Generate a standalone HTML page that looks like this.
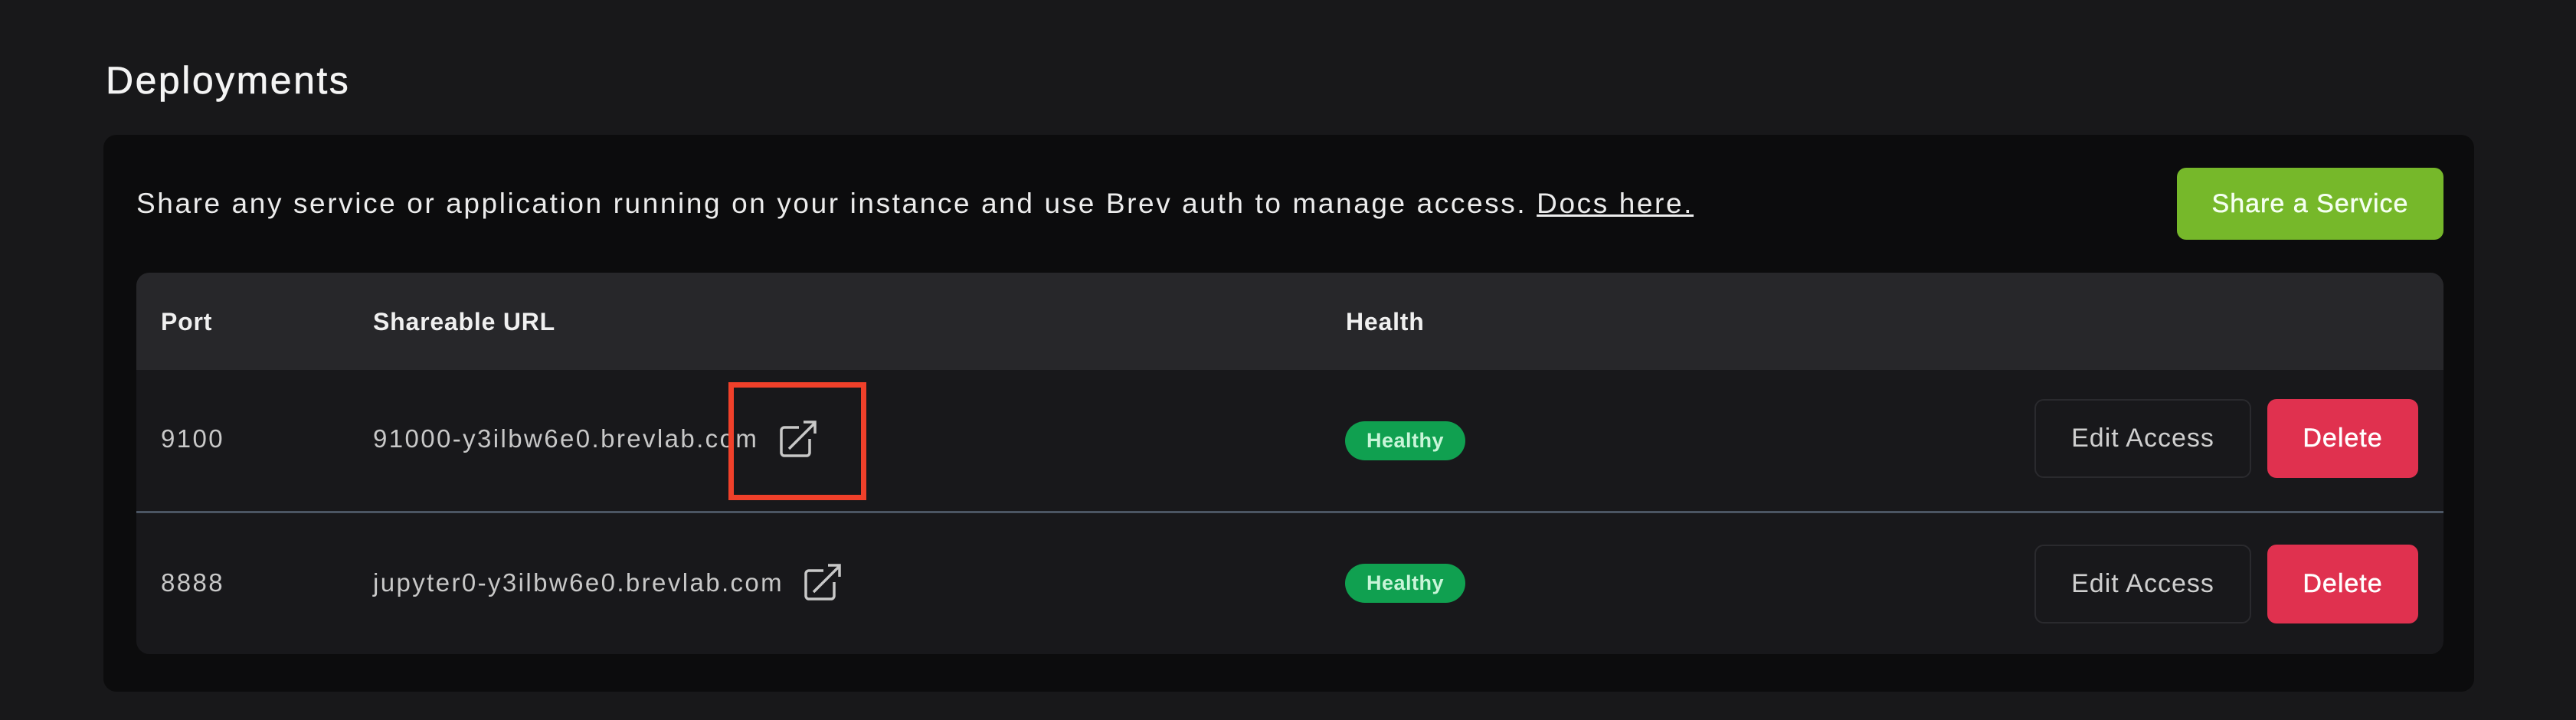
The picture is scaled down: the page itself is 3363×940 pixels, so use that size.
<!DOCTYPE html>
<html><head><meta charset="utf-8"><style>
*{margin:0;padding:0;box-sizing:border-box}
body{width:3363px;height:940px;background:#18181a;font-family:"Liberation Sans",sans-serif;position:relative;overflow:hidden;color:#e8e8e8}
.abs{position:absolute}
h1{position:absolute;left:138px;top:80px;font-size:50px;font-weight:400;color:#f4f4f4;line-height:1;letter-spacing:2.5px;-webkit-text-stroke:0.6px #f4f4f4}
.card{left:135px;top:176px;width:3095px;height:727px;background:#0c0c0d;border-radius:17px}
.desc{left:178px;top:246px;font-size:37px;color:#ececec;line-height:40px;white-space:nowrap;letter-spacing:2.6px}
.desc u{text-decoration:underline}
.btn{position:absolute;display:flex;align-items:center;justify-content:center;border-radius:12px;font-size:34px;letter-spacing:1px}
.share{left:2842px;top:219px;width:348px;height:94px;background:#76b82a;color:#f4fff0;-webkit-text-stroke:0.5px #f4fff0}
.table{left:178px;top:356px;width:3012px;height:498px;background:#18181b;border-radius:17px;overflow:hidden}
.head{position:absolute;left:0;top:0;width:100%;height:127px;background:#27272a}
.th{position:absolute;top:46px;font-size:32px;font-weight:700;color:#f0f0f0;letter-spacing:0.8px}
.td{position:absolute;font-size:33px;color:#c8c8c8;line-height:36px;letter-spacing:2.4px}
.sep{position:absolute;left:0;top:311px;width:100%;height:3px;background:#4b5563}
.badge{position:absolute;width:157px;height:51px;border-radius:26px;background:#10a050;color:#c8f5d8;font-weight:700;font-size:27px;display:flex;align-items:center;justify-content:center;letter-spacing:0.5px}
.edit{width:283px;height:103px;border:2px solid #2a2a2e;color:#cfcfcf;background:#18181b}
.del{width:197px;height:103px;background:#e0314f;color:#fff;-webkit-text-stroke:0.5px #fff}
</style></head><body>
<h1>Deployments</h1>
<div class="abs card"></div>
<div class="abs desc">Share any service or application running on your instance and use Brev auth to manage access. <u>Docs here.</u></div>
<div class="btn share">Share a Service</div>
<div class="abs table">
 <div class="head"></div>
 <div class="th" style="left:32px">Port</div>
 <div class="th" style="left:309px">Shareable URL</div>
 <div class="th" style="left:1579px">Health</div>
 <div class="td" style="left:32px;top:199px">9100</div>
 <div class="td" style="left:309px;top:199px">91000-y3ilbw6e0.brevlab.com</div>
 <div class="sep"></div>
 <div class="td" style="left:32px;top:387px">8888</div>
 <div class="td" style="left:309px;top:387px">jupyter0-y3ilbw6e0.brevlab.com</div>
</div>
<svg class="abs" style="left:1017px;top:548px" width="51" height="51" viewBox="0 0 51 51" fill="none" stroke="#c8c8c8" stroke-width="3.5"><path d="M26 10H7a4 4 0 0 0-4 4v29a4 4 0 0 0 4 4h29a4 4 0 0 0 4-4V25"/><path d="M13 38L46 5M32 3h15v15"/></svg>
<svg class="abs" style="left:1049px;top:735px" width="51" height="51" viewBox="0 0 51 51" fill="none" stroke="#c8c8c8" stroke-width="3.5"><path d="M26 10H7a4 4 0 0 0-4 4v29a4 4 0 0 0 4 4h29a4 4 0 0 0 4-4V25"/><path d="M13 38L46 5M32 3h15v15"/></svg>
<div class="abs" style="left:951px;top:499px;width:180px;height:154px;border:7px solid #f0402a"></div>
<div class="badge" style="left:1756px;top:550px">Healthy</div>
<div class="badge" style="left:1756px;top:736px">Healthy</div>
<div class="btn edit" style="left:2656px;top:521px">Edit Access</div>
<div class="btn del" style="left:2960px;top:521px">Delete</div>
<div class="btn edit" style="left:2656px;top:711px">Edit Access</div>
<div class="btn del" style="left:2960px;top:711px">Delete</div>
</body></html>
